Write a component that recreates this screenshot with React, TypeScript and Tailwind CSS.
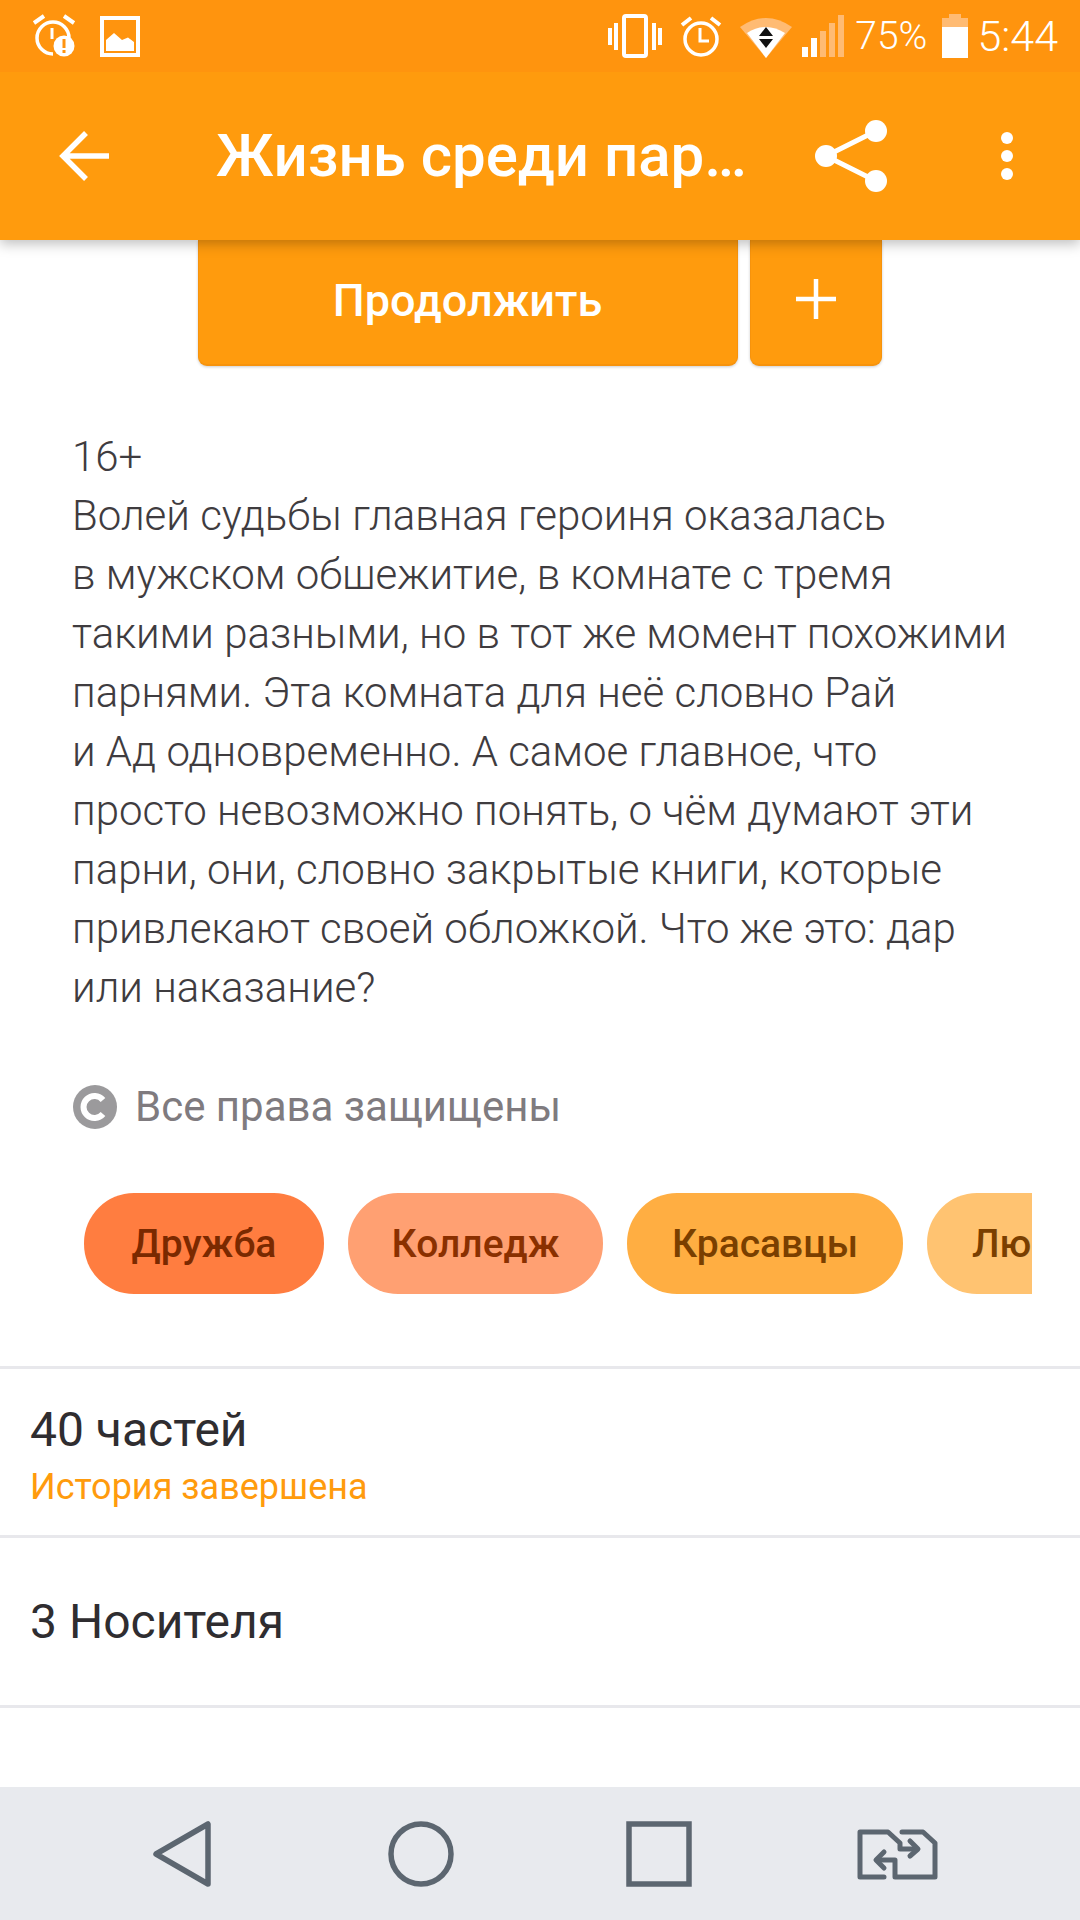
import React from "react";

const lines = [
  "16+",
  "Волей судьбы главная героиня оказалась",
  "в мужском обшежитие, в комнате с тремя",
  "такими разными, но в тот же момент похожими",
  "парнями. Эта комната для неё словно Рай",
  "и Ад одновременно. А самое главное, что",
  "просто невозможно понять, о чём думают эти",
  "парни, они, словно закрытые книги, которые",
  "привлекают своей обложкой. Что же это: дар",
  "или наказание?",
];

function StatusLeft() {
  return (
    <div className="flex items-center gap-[24px] pl-[32px]">
      <svg width="44" height="46" viewBox="0 0 44 46" fill="none" stroke="#fff">
        <path d="M2 10 L12 3 M42 10 L32 3" strokeWidth="4" />
        <path d="M21 41 A16 16 0 1 1 37 25" strokeWidth="3.5" />
        <path d="M20 15 V26" strokeWidth="3" />
        <circle cx="32" cy="33" r="10.5" fill="#fff" stroke="none" />
        <path d="M32 26 V35 M32 37 V40" stroke="#ff9410" strokeWidth="3" />
      </svg>
      <svg width="40" height="41" viewBox="0 0 40 41" fill="none">
        <rect x="2" y="2" width="36" height="37" stroke="#fff" strokeWidth="4" />
        <path d="M6 35 V24 L14 17 L22 24 L28 21.5 L34 26 V35 Z" fill="#fff" />
      </svg>
    </div>
  );
}

function StatusRight() {
  return (
    <div className="flex items-center pr-[22px]">
      <svg width="54" height="44" viewBox="0 0 54 44" fill="#fff">
        <rect x="0" y="14" width="4" height="17" />
        <rect x="6" y="9" width="4" height="27" />
        <rect x="44" y="9" width="4" height="27" />
        <rect x="50" y="14" width="4" height="17" />
        <rect x="16" y="2" width="22" height="40" rx="2" fill="none" stroke="#fff" strokeWidth="4" />
      </svg>
      <svg className="ml-[18px]" width="42" height="44" viewBox="0 0 42 44" fill="none" stroke="#fff">
        <path d="M2 11 L11 4 M40 11 L31 4" strokeWidth="4" />
        <circle cx="21" cy="25" r="16" strokeWidth="3.5" />
        <path d="M20 14 V27 H29" strokeWidth="3" />
      </svg>
      <svg className="ml-[18px]" width="52" height="44" viewBox="0 0 52 44">
        <path d="M0 13 Q26 -5 52 13 L26 44 Z" fill="#ffbb73" />
        <path d="M7 19 Q26 7 45 19 L26 44 Z" fill="#fff" />
        <path d="M26 13 L33 22 H19 Z M19 25 H33 L26 34 Z" fill="#111" />
      </svg>
      <svg className="ml-[10px]" width="42" height="44" viewBox="0 0 42 44">
        <rect x="0" y="33" width="6" height="10" fill="#fff" />
        <rect x="9" y="24" width="6" height="19" fill="#fff" />
        <rect x="18" y="17" width="6" height="26" fill="#ffbb73" />
        <rect x="27" y="9" width="6" height="34" fill="#ffbb73" />
        <rect x="36" y="1" width="6" height="42" fill="#ffbb73" />
      </svg>
      <span className="ml-[11px] text-[39px] font-light text-white leading-none">75%</span>
      <svg className="ml-[15px]" width="26" height="44" viewBox="0 0 26 44">
        <path d="M7 0 H19 V4 H26 V13 H0 V4 H7 Z" fill="#ffbb73" />
        <rect x="0" y="13" width="26" height="31" fill="#fff" />
      </svg>
      <span className="ml-[9px] text-[43px] font-light text-white leading-none">5:44</span>
    </div>
  );
}

function Chip({ label, bg, fg, className }: { label: string; bg: string; fg: string; className: string }) {
  return (
    <div className={`shrink-0 h-[101px] pt-[1px] rounded-[50px] flex items-center text-[39px] font-medium ${className}`} style={{ backgroundColor: bg, color: fg }}>
      {label}
    </div>
  );
}

function NavIcons() {
  return (
    <div className="h-[133px] shrink-0 bg-[#e8eaee] flex items-center">
      <svg className="ml-[153px]" width="60" height="66" viewBox="0 0 60 66" fill="none" stroke="#5c6670" strokeWidth="5.5" strokeLinejoin="round">
        <path d="M55 3 V63 L3 33 Z" />
      </svg>
      <svg className="ml-[175px]" width="66" height="66" viewBox="0 0 66 66" fill="none" stroke="#5c6670" strokeWidth="5.5">
        <circle cx="33" cy="33" r="30" />
      </svg>
      <svg className="ml-[172px]" width="66" height="66" viewBox="0 0 66 66" fill="none" stroke="#5c6670" strokeWidth="5.5">
        <rect x="3" y="3" width="60" height="60" />
      </svg>
      <svg className="ml-[163px]" width="85" height="58" viewBox="15 15 85 58" fill="none" stroke="#5c6670" strokeWidth="5" strokeLinejoin="round" strokeLinecap="round">
        <path d="M44 67 H20 V22 H48 L60 33 V39 H76" />
        <path d="M70 31 L78 39 L70 46" />
        <path d="M62 22 H83 L95 33 V67 H55 V50 H38" />
        <path d="M44 42 L36 50 L44 58" />
      </svg>
    </div>
  );
}

export default function App() {
  return (
    <div className="w-[1080px] h-[1920px] bg-white flex flex-col overflow-hidden font-['Roboto',sans-serif]">
      <div className="relative z-10 shrink-0 shadow-[0_4px_12px_rgba(0,0,0,0.25)]">
        <div className="h-[72px] bg-[#ff940e] flex items-center justify-between">
          <StatusLeft />
          <StatusRight />
        </div>
        <div className="h-[168px] bg-[#ff9b0d] flex items-center">
          <svg className="ml-[59px]" width="50" height="50" viewBox="0 0 50 50" fill="none" stroke="#fff" strokeWidth="5.5">
            <path d="M50 25 H4 M27 2 L4 25 L27 48" />
          </svg>
          <div className="ml-[107px] w-[560px] text-[60px] font-medium text-white whitespace-nowrap leading-none">Жизнь среди пар…</div>
          <svg className="ml-[39px]" width="72" height="72" viewBox="0 0 72 72" fill="#fff" stroke="#fff">
            <circle cx="11" cy="36" r="11" stroke="none" />
            <circle cx="61" cy="11" r="11" stroke="none" />
            <circle cx="61" cy="61" r="11" stroke="none" />
            <path d="M11 36 L61 11 M11 36 L61 61" strokeWidth="5" />
          </svg>
          <div className="ml-[114px] flex flex-col gap-[6px]">
            <div className="w-[12px] h-[12px] rounded-full bg-white" />
            <div className="w-[12px] h-[12px] rounded-full bg-white" />
            <div className="w-[12px] h-[12px] rounded-full bg-white" />
          </div>
        </div>
      </div>

      <div className="flex-1 flex flex-col min-h-0">
        <div className="flex justify-center gap-[12px] ml-[-1px]">
          <div className="w-[540px] h-[126px] pb-[2px] bg-[#ff9b0d] border-b-[2px] border-x-[1px] border-[#f7930c] rounded-b-[9px] shadow-[0_1px_3px_rgba(0,0,0,0.2)] flex items-center justify-center text-[45px] font-medium text-white">Продолжить</div>
          <div className="w-[132px] h-[126px] pb-[6px] bg-[#ff9b0d] border-b-[2px] border-x-[1px] border-[#f7930c] rounded-b-[9px] shadow-[0_1px_3px_rgba(0,0,0,0.2)] flex items-center justify-center">
            <svg width="40" height="40" viewBox="0 0 40 40" stroke="#fff" strokeWidth="4.5">
              <path d="M0 20 H40 M20 0 V40" />
            </svg>
          </div>
        </div>

        <div className="mt-[61px] pl-[72px] text-[42px] font-light leading-[59px] text-[#3f3c3f]">
          {lines.map((l) => (
            <div key={l} className="whitespace-nowrap">{l}</div>
          ))}
        </div>

        <div className="mt-[60px] pl-[73px] flex items-center h-[59px]">
          <svg width="44" height="44" viewBox="0 0 44 44">
            <circle cx="22" cy="22" r="22" fill="#9b9a9c" />
            <path d="M30 15 A11 11 0 1 0 30 29" fill="none" stroke="#fff" strokeWidth="6" />
          </svg>
          <span className="ml-[18px] text-[42px] leading-none text-[#7f7b7f]">Все права защищены</span>
        </div>

        <div className="mt-[57px] ml-[84px] w-[948px] flex gap-[24px] overflow-hidden">
          <Chip label="Дружба" bg="#ff7d40" fg="#7a2900" className="w-[240px] justify-center" />
          <Chip label="Колледж" bg="#ffa072" fg="#8a3000" className="w-[255px] justify-center" />
          <Chip label="Красавцы" bg="#ffae42" fg="#7a3f00" className="w-[276px] justify-center" />
          <Chip label="Любовь" bg="#ffc371" fg="#7a3f00" className="w-[200px] pl-[45px]" />
        </div>

        <div className="mt-[72px] h-[169px] border-t-[3px] border-[#e8e8ec] pl-[30px] flex flex-col justify-center pt-[5px]">
          <div className="text-[48px] leading-[60px] text-[#2f2d30]">40 частей</div>
          <div className="text-[36px] leading-[44px] text-[#ff9b0d] mt-[5px]">История завершена</div>
        </div>
        <div className="h-[173px] pt-[1px] border-y-[3px] border-[#e8e8ec] pl-[30px] flex items-center text-[48px] text-[#2f2d30]">3 Носителя</div>
      </div>

      <NavIcons />
    </div>
  );
}
